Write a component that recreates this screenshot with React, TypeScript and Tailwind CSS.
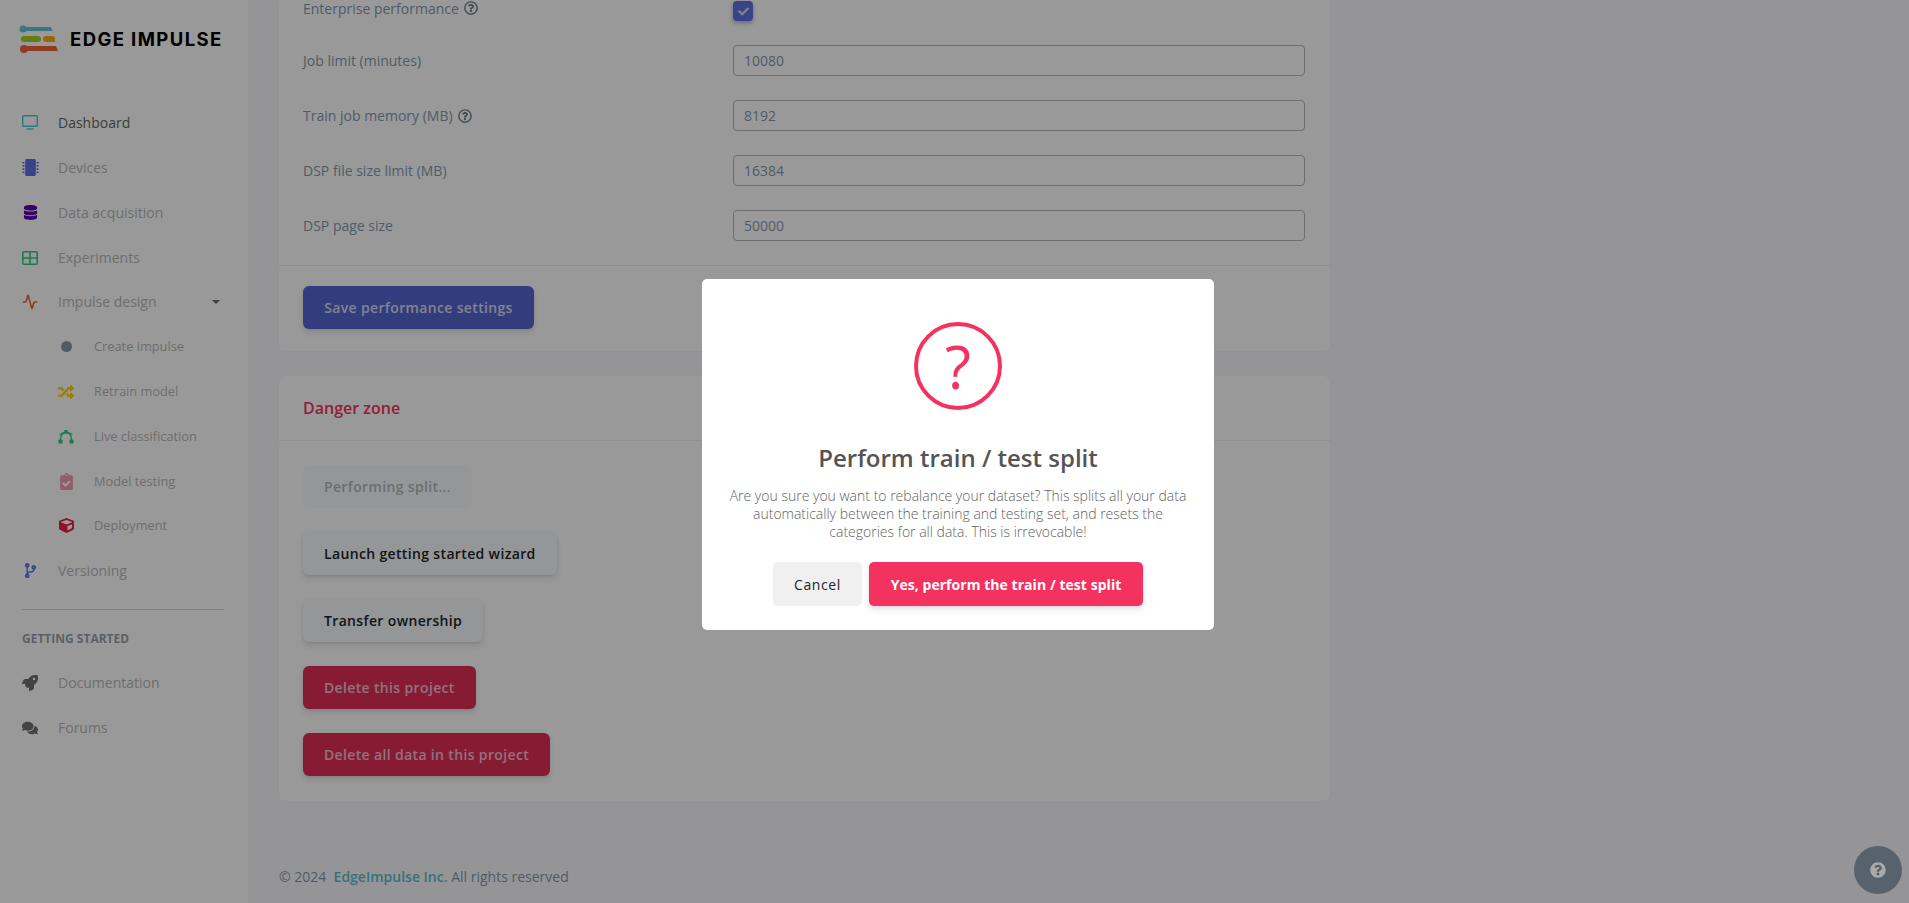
import { ReactNode } from "react";
import {
  FaCheck,
  FaCodeBranch,
  FaComments,
  FaClipboardCheck,
  FaCube,
  FaDatabase,
  FaMicrochip,
  FaQuestionCircle,
  FaRandom,
  FaRegQuestionCircle,
  FaRocket,
} from "react-icons/fa";
import { Activity } from "lucide-react";

function Logo() {
  return (
    <svg width="42" height="30" viewBox="0 0 42 30" className="shrink-0">
      <circle cx="4" cy="5" r="3.5" fill="#61c5d6" />
      <path d="M4 3h28l1.5 4H4z" fill="#61c5d6" />
      <rect x="2" y="12" width="20" height="6" rx="3" fill="#a6d11a" />
      <path d="M27 12h6a3 3 0 0 1 3 3v3H27a3 3 0 0 1 0-6z" fill="#f5ae12" />
      <circle cx="5" cy="25" r="4" fill="#f4623a" />
      <path d="M5 22h32l2 5H5z" fill="#f4623a" />
    </svg>
  );
}

function MonitorIcon() {
  return (
    <svg width="16" height="15" viewBox="0 0 16 15" fill="none" stroke="#52c3d3" strokeWidth="1.4">
      <rect x="0.7" y="0.7" width="14.6" height="10.6" rx="1" />
      <path d="M4.5 14h7" />
    </svg>
  );
}

function GridIcon() {
  return (
    <svg width="16" height="14" viewBox="0 0 16 14" fill="none" stroke="#2dce89" strokeWidth="1.6">
      <rect x="0.8" y="0.8" width="14.4" height="12.4" rx="1" />
      <path d="M0.8 7h14.4M8 0.8v12.4" />
    </svg>
  );
}

function BezierIcon() {
  return (
    <svg width="16" height="15" viewBox="0 0 16 15" fill="none" stroke="#2dce89" strokeWidth="1.3">
      <path d="M2.5 11C2.5 6 5 3.5 8 3.5s5.5 2.500 5.500 7.500" />
      <path d="M8 2.500L1.500 5.500M8 2.500l6.500 3" />
      <rect x="0.500" y="10.500" width="4" height="4" rx="0.800" fill="#2dce89" stroke="none" />
      <rect x="11.500" y="10.500" width="4" height="4" rx="0.800" fill="#2dce89" stroke="none" />
      <rect x="6.300" y="1" width="3.400" height="3.400" rx="0.500" fill="#2dce89" stroke="none" />
    </svg>
  );
}

function NavItem({ icon, label, active }: { icon: ReactNode; label: string; active?: boolean }) {
  return (
    <div className="flex h-[45px] items-center pl-5">
      <span className="flex w-5 shrink-0 items-center justify-center">{icon}</span>
      <span className={`ml-[18px] text-[14px] ${active ? "text-[#666666]" : "text-[#b8b8b8]"}`}>{label}</span>
    </div>
  );
}

function SubItem({ icon, label }: { icon: ReactNode; label: string }) {
  return (
    <div className="flex h-[45px] items-center pl-14">
      <span className="flex w-5 shrink-0 items-center justify-center">{icon}</span>
      <span className="ml-[18px] text-[12.8px] text-[#b8b8b8]">{label}</span>
    </div>
  );
}

function Row({ label, help, value }: { label: string; help?: boolean; value: string }) {
  return (
    <div className="mb-6 flex h-[31px] items-center">
      <div className="flex w-[430px] items-center gap-[5px] text-[14px] text-[#8898aa]">
        {label}
        {help && <FaRegQuestionCircle className="text-[14px] text-[#6b7684]" />}
      </div>
      <input
        readOnly
        value={value}
        className="mr-px h-[31px] min-w-0 flex-1 rounded border border-[#b5b8bc] bg-white px-[10px] text-[14px] text-[#8898aa]"
      />
    </div>
  );
}

function DangerButton({ label, kind }: { label: string; kind: "plain" | "muted" | "red" }) {
  const look =
    kind === "red"
      ? "bg-[#e32e58] font-semibold text-[#f0c0cc] shadow-[0_4px_6px_rgba(50,50,93,0.11),0_1px_3px_rgba(0,0,0,0.08)]"
      : kind === "muted"
        ? "bg-[#f7fafc] font-semibold text-[#8e9095] opacity-65"
        : "bg-[#f7fafc] font-semibold text-[#212529] shadow-[0_4px_6px_rgba(50,50,93,0.11),0_1px_3px_rgba(0,0,0,0.08)]";
  return (
    <button className={`mb-6 block h-[43px] rounded-md px-[21px] text-[14px] tracking-[0.35px] ${look}`}>{label}</button>
  );
}

export default function App() {
  return (
    <div className="relative flex h-screen overflow-hidden bg-[#f8f9fe] font-['Open_Sans',sans-serif]">
      {/* Sidebar */}
      <aside className="w-[248px] shrink-0 bg-white">
        <div className="flex h-[100px] items-start pl-[19px] pt-[24px]">
          <Logo />
          <span className="ml-[9px] font-['Inter',sans-serif] text-[18.5px] font-bold leading-[30px] tracking-[1.4px] text-black">
            EDGE IMPULSE
          </span>
        </div>
        <NavItem active label="Dashboard" icon={<MonitorIcon />} />
        <NavItem label="Devices" icon={<FaMicrochip className="text-[17px] text-[#5e72e4]" />} />
        <NavItem label="Data acquisition" icon={<FaDatabase className="text-[15px] text-[#5603ad]" />} />
        <NavItem label="Experiments" icon={<GridIcon />} />
        <div className="relative -mt-px">
          <NavItem label="Impulse design" icon={<Activity size={16} color="#f5603a" strokeWidth={2.4} />} />
          <span className="absolute right-[28px] top-[21px] h-0 w-0 border-x-[4px] border-t-[4px] border-x-transparent border-t-[#6f6f6f]" />
        </div>
        <SubItem label="Create impulse" icon={<span className="block h-[11px] w-[11px] rounded-full bg-[#8898aa]" />} />
        <SubItem label="Retrain model" icon={<FaRandom className="text-[16px] text-[#ffd600]" />} />
        <SubItem label="Live classification" icon={<BezierIcon />} />
        <SubItem label="Model testing" icon={<FaClipboardCheck className="text-[17px] text-[#f59ab0]" />} />
        <div className="-mt-px">
          <SubItem label="Deployment" icon={<FaCube className="text-[15px] text-[#ee1a4f]" />} />
        </div>
        <NavItem label="Versioning" icon={<FaCodeBranch className="text-[15px] text-[#5e72e4]" />} />
        <div className="ml-[22px] mr-6 mt-4 border-t border-[#d8d8d8]" />
        <div className="mt-[20px] pl-[22px] text-[12px] font-bold leading-[17px] text-[#9aa1aa]">GETTING STARTED</div>
        <div className="mt-[13px]">
          <NavItem label="Documentation" icon={<FaRocket className="text-[16px] text-[#707070]" />} />
          <NavItem label="Forums" icon={<FaComments className="text-[16px] text-[#707070]" />} />
        </div>
      </aside>

      {/* Page content */}
      <main className="min-w-0 flex-1 pl-[31px]">
        <div className="w-[1051px] rounded-b-md bg-white shadow-[0_0_2px_rgba(0,0,0,0.05)]">
          <div className="border-b border-[#eeeeee] px-6 pt-px">
            <div className="mb-6 flex h-5 items-center">
              <div className="flex w-[430px] items-center gap-[5px] pb-[6px] text-[14px] text-[#8898aa]">
                Enterprise performance
                <FaRegQuestionCircle className="text-[14px] text-[#6b7684]" />
              </div>
              <span className="flex h-5 w-5 items-center justify-center rounded bg-[#5e72e4] shadow-[0_2px_4px_rgba(50,50,93,0.4)]">
                <FaCheck className="text-[11px] text-[#dddddd]" />
              </span>
            </div>
            <Row label="Job limit (minutes)" value="10080" />
            <Row label="Train job memory (MB)" help value="8192" />
            <Row label="DSP file size limit (MB)" value="16384" />
            <Row label="DSP page size" value="50000" />
          </div>
          <div className="px-6 pb-[22px] pt-[20px]">
            <button className="block h-[43px] w-[231px] rounded-md bg-[#5666d0] text-[14px] font-semibold tracking-[0.35px] text-[#d8dcf2] shadow-[0_4px_6px_rgba(50,50,93,0.11),0_1px_3px_rgba(0,0,0,0.08)]">
              Save performance settings
            </button>
          </div>
        </div>

        <div className="mt-[25px] w-[1051px] rounded-md bg-white shadow-[0_0_2px_rgba(0,0,0,0.05)]">
          <div className="flex h-[65px] items-center border-b border-[#eeeeee] px-6 text-[16px] font-semibold text-[#f4325f]">
            Danger zone
          </div>
          <div className="px-6 pb-px pt-[24px]">
            <DangerButton kind="muted" label="Performing split..." />
            <DangerButton kind="plain" label="Launch getting started wizard" />
            <DangerButton kind="plain" label="Transfer ownership" />
            <DangerButton kind="red" label="Delete this project" />
            <DangerButton kind="red" label="Delete all data in this project" />
          </div>
        </div>

        <div className="mt-[65px] text-[14px] text-[#8898aa]">
          © 2024 &nbsp;<span className="font-semibold text-[#5bbfc6]">EdgeImpulse Inc.</span> All rights reserved
        </div>
      </main>

      {/* Dialog overlay */}
      <div className="absolute inset-0 flex items-center justify-center bg-black/40 pl-[7px] pt-[5px]">
        <div className="flex h-[351px] w-[512px] flex-col items-center rounded-[5px] bg-white pt-[43px]">
          <div className="flex h-[88px] w-[88px] items-center justify-center rounded-full border-4 border-[#f4325f] text-[60px] font-normal leading-none text-[#f4325f]">
            ?
          </div>
          <h2 className="mt-[30px] text-[24px] font-semibold leading-[36px] text-[#545454]">Perform train / test split</h2>
          <p className="mt-[11px] w-[470px] text-center text-[14px] font-light leading-[18.2px] text-[#5f5f5f]">
            Are you sure you want to rebalance your dataset? This splits all your data automatically between the training
            and testing set, and resets the categories for all data. This is irrevocable!
          </p>
          <div className="mt-[21px] flex gap-[7px]">
            <button className="h-[44px] w-[89px] rounded-[5px] bg-[#f0f0f0] text-[14px] font-medium tracking-[0.6px] text-[#212529]">
              Cancel
            </button>
            <button className="h-[44px] w-[274px] rounded-[5px] bg-[#f4325f] text-[14px] font-bold tracking-[0.05px] text-white shadow-[0_4px_6px_rgba(50,50,93,0.11),0_1px_3px_rgba(0,0,0,0.08)]">
              Yes, perform the train / test split
            </button>
          </div>
        </div>
      </div>

      {/* Help bubble */}
      <div className="absolute right-[7px] top-[846px] flex h-12 w-12 items-center justify-center rounded-full bg-[#56636f]">
        <FaQuestionCircle className="text-[16px] text-[#a9a9a9]" />
      </div>
    </div>
  );
}
